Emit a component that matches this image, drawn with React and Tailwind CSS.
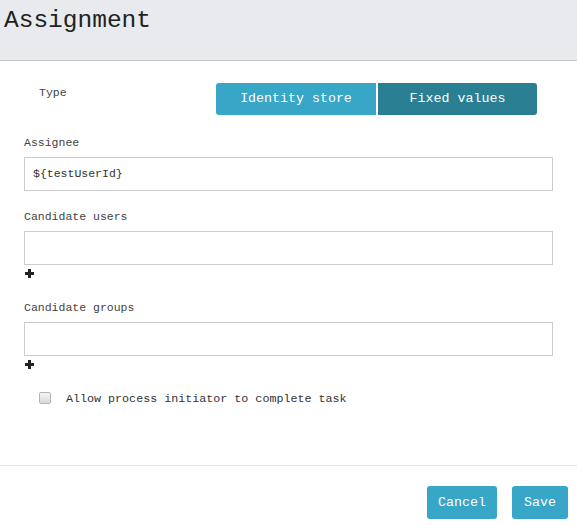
import React from 'react';

const mono = { fontFamily: '"Liberation Mono", "DejaVu Sans Mono", monospace' };

const Plus = () => (
  <svg width="9" height="9" viewBox="0 0 9 9" className="block ml-[1px] mt-[4px]">
    <rect x="3" y="0" width="3" height="9" fill="#222" />
    <rect x="0" y="3" width="9" height="3" fill="#222" />
  </svg>
);

const Field = ({ label, value, className = '' }) => (
  <div className={className}>
    <label className="block text-[11.5px] leading-[16px] text-[#444]">{label}</label>
    <div className="mt-[6px] h-[34px] border border-[#cccccc] bg-white px-[8px] flex items-center text-[11.5px] text-[#333]">
      {value}
    </div>
  </div>
);

export default function App() {
  return (
    <div className="w-[577px] h-[525px] bg-white flex flex-col overflow-hidden" style={mono}>
      {/* Header */}
      <header className="h-[61px] bg-[#e8eaed] border-b border-[#c4c6c8] pl-[4px] pt-[5px]">
        <h1 className="text-[24.5px] leading-[32px] text-[#222]">Assignment</h1>
      </header>

      {/* Body */}
      <main className="flex-1 px-[24px] pt-[22px]">
        <div className="flex items-start">
          <span className="pl-[15px] pt-[4px] text-[11.5px] leading-[12px] text-[#444] w-[192px]">Type</span>
          <div className="flex gap-[2px]">
            <button className="w-[160px] h-[32px] bg-[#37a6c7] text-white text-[13.3px] rounded-l-[3px]">Identity store</button>
            <button className="w-[159px] h-[32px] bg-[#2a7f93] text-white text-[13.3px] rounded-r-[3px]">Fixed values</button>
          </div>
        </div>

        <Field label="Assignee" value="${testUserId}" className="mt-[20px]" />

        <Field label="Candidate users" value="" className="mt-[18px]" />
        <Plus />

        <Field label="Candidate groups" value="" className="mt-[22px]" />
        <Plus />

        <label className="flex items-center mt-[20px] pl-[15px]">
          <span className="w-[12px] h-[12px] rounded-[2px] border border-[#b5b5b5] bg-gradient-to-b from-[#f4f4f4] to-[#d9d9d9]" />
          <span className="ml-[15px] text-[11.7px] text-[#333] leading-[16px] mt-[2px]">Allow process initiator to complete task</span>
        </label>
      </main>

      {/* Footer */}
      <footer className="h-[60px] border-t border-[#e5e5e5] flex justify-end items-start pt-[20px] pr-[9px] gap-[15px]">
        <button className="w-[70px] h-[33px] rounded-[3px] bg-[#37a6c7] text-white text-[13.3px]">Cancel</button>
        <button className="w-[56px] h-[33px] rounded-[3px] bg-[#37a6c7] text-white text-[13.3px]">Save</button>
      </footer>
    </div>
  );
}
